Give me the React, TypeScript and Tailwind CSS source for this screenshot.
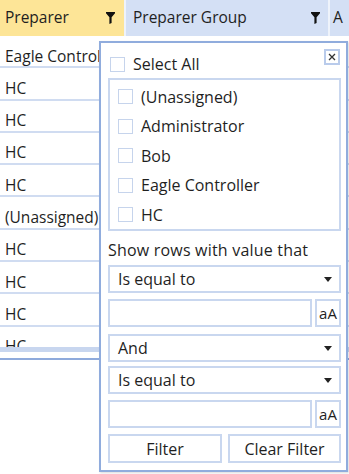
import React from "react";

const font = { fontFamily: '"Open Sans", "Noto Sans", sans-serif' };

function Funnel() {
  return (
    <svg width="9" height="12" viewBox="0 0 9 12" className="shrink-0">
      <path d="M0 0H9V1.2L5.6 5.2V11L3.4 12V5.2L0 1.2Z" fill="#111" />
    </svg>
  );
}

function Arrow() {
  return (
    <svg width="8" height="5" viewBox="0 0 8 5">
      <path d="M0 0H8L4 5Z" fill="#222" />
    </svg>
  );
}

function Box() {
  return <div className="w-[15px] h-[15px] border border-[#c6d4ec] bg-white shrink-0" />;
}

const rows = ["Eagle Controller", "HC", "HC", "HC", "HC", "(Unassigned)", "HC", "HC", "HC", "HC"];
const items = ["(Unassigned)", "Administrator", "Bob", "Eagle Controller", "HC"];

function Select({ label, cls }: { label: string; cls: string }) {
  return (
    <div className={`flex items-center justify-between border-2 border-[#c9d7ef] bg-white pl-[8px] pr-[7px] ${cls}`}>
      <span>{label}</span>
      <Arrow />
    </div>
  );
}

function InputRow({ cls }: { cls: string }) {
  return (
    <div className={`flex gap-[3px] ${cls}`}>
      <div className="flex-1 border-2 border-[#c9d7ef] bg-white" />
      <div className="w-[26px] border-2 border-[#c9d7ef] bg-white flex items-center justify-center text-[15px]">aA</div>
    </div>
  );
}

export default function App() {
  return (
    <div className="relative w-[349px] h-[474px] bg-white overflow-hidden text-[15.5px] text-[#1f1f1f]" style={font}>
      {/* header */}
      <div className="flex h-[36px]">
        <div className="w-[124px] bg-[#fde597] flex items-center justify-between pl-[5px] pr-[9px]">
          <span>Preparer</span>
          <Funnel />
        </div>
        <div className="w-[2px] bg-[#eef3fb]" />
        <div className="w-[202px] bg-[#d4e0f5] flex items-center justify-between pl-[7px] pr-[8px]">
          <span>Preparer Group</span>
          <Funnel />
        </div>
        <div className="w-[2px] bg-[#eef3fb]" />
        <div className="flex-1 bg-[#d4e0f5] flex items-center pl-[3px]">
          <span>A</span>
        </div>
      </div>
      {/* rows */}
      <div className="h-[311px] overflow-hidden">
        {rows.map((r, i) => (
          <div key={i} className="h-[32.3px] border-b-2 border-[#d0dcf1] flex items-center pl-[5px] pt-[10px] whitespace-nowrap">
            {r}
          </div>
        ))}
      </div>
      <div className="h-[5px] bg-[#c8d6ef]" />
      <div className="h-[6px]" />
      <div className="h-[2px] bg-[#8eaadc]" />

      {/* popup */}
      <div className="absolute left-[99px] top-[41px] w-[249px] h-[431px] border-2 border-[#90acdd] bg-white pl-[7px] pr-[5px] text-[16px] shadow-[1px_1px_2px_rgba(0,0,0,0.15)]">
        <div className="h-[35px] pt-[7px] flex items-start">
          <div className="flex items-center gap-[8px] h-[28px] pl-[2px]">
            <Box />
            <span>Select All</span>
          </div>
        </div>
        <div className="absolute right-[6px] top-[6px] w-[16px] h-[16px] border-2 border-[#b9cbeb] bg-white flex items-center justify-center">
          <svg width="8" height="8" viewBox="0 0 8 8">
            <path d="M1 1L7 7M7 1L1 7" stroke="#333" strokeWidth="1.3" />
          </svg>
        </div>
        <div className="h-[153px] border-2 border-[#c9d7ef] pt-[2px] pl-[8px] overflow-hidden">
          {items.map((it) => (
            <div key={it} className="h-[29.5px] flex items-center gap-[8px]">
              <Box />
              <span>{it}</span>
            </div>
          ))}
        </div>
        <div className="h-[34px] flex items-center pt-[3px] tracking-[0.2px]">Show rows with value that</div>
        <Select label="Is equal to" cls="h-[28px]" />
        <InputRow cls="h-[28px] mt-[6px]" />
        <Select label="And" cls="h-[28px] mt-[7px]" />
        <Select label="Is equal to" cls="h-[28px] mt-[4px]" />
        <InputRow cls="h-[28px] mt-[6px]" />
        <div className="flex gap-[6px] h-[29px] mt-[6px]">
          <div className="w-[114px] border-2 border-[#c9d7ef] flex items-center justify-center">Filter</div>
          <div className="flex-1 border-2 border-[#c9d7ef] flex items-center justify-center">Clear Filter</div>
        </div>
      </div>
    </div>
  );
}
